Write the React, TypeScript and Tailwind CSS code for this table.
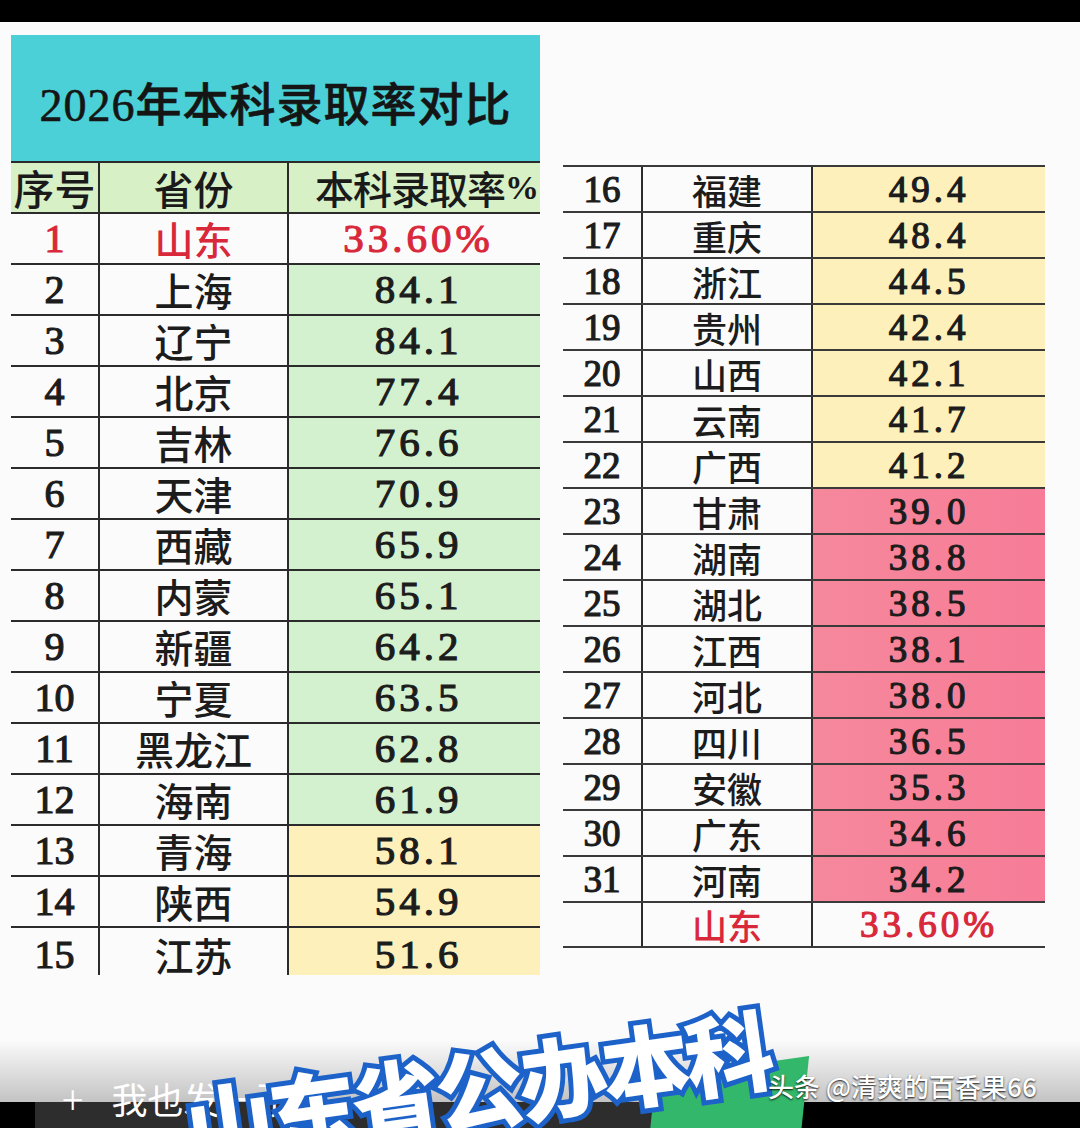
import React from 'react';

type Row = { no: string; name: string; rate: string; tone: 'green' | 'yellow' | 'pink' | 'none'; red?: boolean };

const leftRows: Row[] = [
  { no: '1', name: '山东', rate: '33.60%', tone: 'none', red: true },
  { no: '2', name: '上海', rate: '84.1', tone: 'green' },
  { no: '3', name: '辽宁', rate: '84.1', tone: 'green' },
  { no: '4', name: '北京', rate: '77.4', tone: 'green' },
  { no: '5', name: '吉林', rate: '76.6', tone: 'green' },
  { no: '6', name: '天津', rate: '70.9', tone: 'green' },
  { no: '7', name: '西藏', rate: '65.9', tone: 'green' },
  { no: '8', name: '内蒙', rate: '65.1', tone: 'green' },
  { no: '9', name: '新疆', rate: '64.2', tone: 'green' },
  { no: '10', name: '宁夏', rate: '63.5', tone: 'green' },
  { no: '11', name: '黑龙江', rate: '62.8', tone: 'green' },
  { no: '12', name: '海南', rate: '61.9', tone: 'green' },
  { no: '13', name: '青海', rate: '58.1', tone: 'yellow' },
  { no: '14', name: '陕西', rate: '54.9', tone: 'yellow' },
  { no: '15', name: '江苏', rate: '51.6', tone: 'yellow' },
];

const rightRows: Row[] = [
  { no: '16', name: '福建', rate: '49.4', tone: 'yellow' },
  { no: '17', name: '重庆', rate: '48.4', tone: 'yellow' },
  { no: '18', name: '浙江', rate: '44.5', tone: 'yellow' },
  { no: '19', name: '贵州', rate: '42.4', tone: 'yellow' },
  { no: '20', name: '山西', rate: '42.1', tone: 'yellow' },
  { no: '21', name: '云南', rate: '41.7', tone: 'yellow' },
  { no: '22', name: '广西', rate: '41.2', tone: 'yellow' },
  { no: '23', name: '甘肃', rate: '39.0', tone: 'pink' },
  { no: '24', name: '湖南', rate: '38.8', tone: 'pink' },
  { no: '25', name: '湖北', rate: '38.5', tone: 'pink' },
  { no: '26', name: '江西', rate: '38.1', tone: 'pink' },
  { no: '27', name: '河北', rate: '38.0', tone: 'pink' },
  { no: '28', name: '四川', rate: '36.5', tone: 'pink' },
  { no: '29', name: '安徽', rate: '35.3', tone: 'pink' },
  { no: '30', name: '广东', rate: '34.6', tone: 'pink' },
  { no: '31', name: '河南', rate: '34.2', tone: 'pink' },
  { no: '', name: '山东', rate: '33.60%', tone: 'none', red: true },
];

const toneClass = {
  green: 'bg-[#d4f1cf]',
  yellow: 'bg-[#fdf0bb]',
  pink: 'bg-gradient-to-r from-[#f5889c] to-[#f77c97]',
  none: '',
};

const serif = 'font-["Liberation_Serif","Noto_Sans_CJK_SC",serif]';
const cjk = 'font-["Noto_Sans_CJK_SC",sans-serif]';
// regular serif with a thin stroke, closer to the faux-bold digits of the sheet
const digits = `${serif} font-normal [-webkit-text-stroke:1.2px_currentColor]`;

function LeftTable() {
  return (
    <div className="w-[529px] shrink-0">
      <div className="h-[126px] bg-[#4ad0d6] flex items-center justify-center pt-[10px]">
        <span className={`${serif} text-[46px] leading-none text-[#151515] tracking-[1px] [-webkit-text-stroke:0.6px_currentColor]`}>
          2026<span className={`${cjk} font-medium`}>年本科录取率对比</span>
        </span>
      </div>
      <div className="grid grid-cols-[89px_189px_251px] h-[53px] border-t-2 border-b-2 border-[#2b2b2b] bg-[#d7f0c6]">
        <div className={`${cjk} font-medium border-r-2 border-[#2b2b2b] flex items-center justify-center text-[41px] leading-none text-[#1a1a1a]`}>序号</div>
        <div className={`${cjk} font-medium border-r-2 border-[#2b2b2b] flex items-center justify-center text-[40px] leading-none text-[#1a1a1a]`}>省份</div>
        <div className={`${cjk} font-medium flex items-center justify-end pr-[2px] text-[39px] leading-none text-[#1a1a1a] tracking-[-1px]`}>
          本科录取率<span className={`${serif} font-bold text-[34px]`}>%</span>
        </div>
      </div>
      {leftRows.map((r, i) => {
        const last = i === leftRows.length - 1;
        const color = r.red ? 'text-[#d8283a]' : 'text-[#1c1c1c]';
        const pad = last ? 'pt-[6px]' : '';
        return (
          <div
            key={r.no}
            className={`grid grid-cols-[89px_189px_251px] ${last ? 'h-[44px]' : 'h-[51px] border-b-2 border-[#2b2b2b]'}`}
          >
            <div className={`${digits} border-r-2 border-[#2b2b2b] flex items-center justify-center text-[40px] leading-none ${color} ${pad}`}>{r.no}</div>
            <div className={`${cjk} font-medium border-r-2 border-[#2b2b2b] flex items-center justify-center text-[39px] leading-none ${color} ${pad}`}>{r.name}</div>
            <div className={`${digits} ${toneClass[r.tone]} flex items-center justify-center pl-[8px] text-[41px] leading-none tracking-[4px] ${color} ${pad}`}>{r.rate}</div>
          </div>
        );
      })}
    </div>
  );
}

function RightTable() {
  return (
    <div className="w-[482px] shrink-0 ml-[23px] mt-[130px] border-t-2 border-[#3a3a3a]">
      {rightRows.map((r, i) => {
        const last = i === rightRows.length - 1;
        const color = r.red ? 'text-[#d8283a]' : 'text-[#1c1c1c]';
        return (
          <div
            key={r.no + r.name}
            className={`grid grid-cols-[80px_170px_232px] ${last ? 'h-[45px]' : 'h-[46px]'} border-b-2 border-[#3a3a3a]`}
          >
            <div className={`${digits} border-r-2 border-[#2b2b2b] flex items-center justify-center text-[37px] leading-none text-[#1c1c1c]`}>{r.no}</div>
            <div className={`${cjk} font-medium border-r-2 border-[#2b2b2b] flex items-center justify-center text-[35px] leading-none ${color}`}>{r.name}</div>
            <div className={`${digits} ${toneClass[r.tone]} flex items-center justify-center text-[37px] leading-none tracking-[4px] ${color}`}>{r.rate}</div>
          </div>
        );
      })}
    </div>
  );
}

export default function App() {
  return (
    <div className="relative w-[1080px] h-[1128px] overflow-hidden bg-[#fbfbfb]">
      <div className="h-[22px] bg-black" />
      <div className="flex pl-[11px] pt-[13px]">
        <LeftTable />
        <RightTable />
      </div>

      {/* bottom overlay: fade, bar, sticker, watermark */}
      <div className="absolute left-0 right-0 top-[1040px] h-[63px] bg-gradient-to-b from-[#fbfbfb00] to-[#c2c2c2]" />
      <div className="absolute left-0 right-0 bottom-0 h-[26px] flex">
        <div className="w-[35px] bg-black" />
        <div className="flex-1 bg-[#2d2d2d]" />
        <div className="w-[280px] bg-black" />
      </div>
      <div className={`absolute left-[62px] top-[1078px] flex items-center gap-[28px] text-white ${cjk} text-[36px] leading-none`}>
        <span className="text-[40px] font-light">+</span>
        <span>我也发一张</span>
      </div>
      <div className="absolute left-[650px] top-[1068px] w-[155px] h-[90px] bg-[#33b86b] -rotate-[8deg] -skew-x-[14deg]" />
      <div
        className={`absolute left-[192px] top-[1082px] -rotate-[8deg] origin-bottom-left ${cjk} font-black text-[88px] leading-none tracking-[-4px] text-white [-webkit-text-stroke:10px_#1d62c9] [paint-order:stroke_fill]`}
      >
        山东省公办本科
      </div>
      <div className={`absolute left-[768px] top-[1073px] ${cjk} font-medium text-[26px] leading-none text-white [text-shadow:0_1px_2px_rgba(0,0,0,0.9)]`}>
        头条 @清爽的百香果66
      </div>
    </div>
  );
}
